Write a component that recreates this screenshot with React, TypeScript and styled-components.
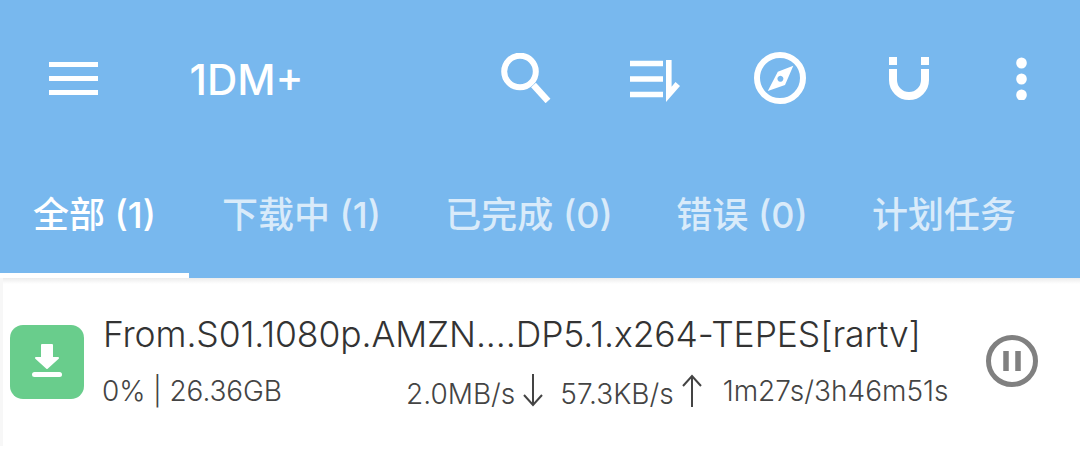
import React from "react";
import styled, { createGlobalStyle } from "styled-components";

const Global = createGlobalStyle`
  html, body { margin: 0; padding: 0; background: #fff; }
  body { width: 1080px; height: 468px; overflow: hidden; font-family: "Inter", "Noto Sans CJK SC", sans-serif; }
`;

const Page = styled.div`
  width: 1080px;
  height: 468px;
  display: flex;
  flex-direction: column;
  background: #fff;
`;

const Header = styled.header`
  background: #78b8ee;
  height: 278px;
  display: flex;
  flex-direction: column;
  flex: none;
`;

const Toolbar = styled.div`
  height: 156px;
  display: flex;
  align-items: center;
  flex: none;
  padding: 0 53px 0 49px;
`;

const ToolSlot = styled.div<{ $gap: number }>`
  margin-left: ${(p) => p.$gap}px;
  flex: none;
  display: flex;
  align-items: center;
`;

const MenuSlot = styled.div`
  flex: none;
  display: flex;
`;

const Title = styled.div`
  flex: 1;
  padding-left: 91.5px;
  font-size: 42px;
  font-weight: 500;
  color: #fff;
  margin-top: 2px;
`;

const Tabs = styled.div`
  flex: 1;
  display: flex;
`;

const Tab = styled.div<{ $w: number; $active?: boolean }>`
  width: ${(p) => p.$w}px;
  flex: none;
  box-sizing: border-box;
  padding-bottom: 6px;
  display: flex;
  justify-content: center;
  align-items: center;
  font-family: "Inter", "Noto Sans CJK SC", sans-serif;
  font-size: 36px;
  font-weight: 500;
  white-space: nowrap;
  color: ${(p) => (p.$active ? "#fff" : "rgba(255,255,255,0.72)")};
  border-bottom: 5px solid ${(p) => (p.$active ? "#fff" : "transparent")};
`;

const Body = styled.div`
  height: 168px;
  flex: none;
  box-sizing: border-box;
  display: flex;
  border-left: 3px solid #f7f7f7;
  background: linear-gradient(#ececec 0, #fff 6px);
`;

const Row = styled.div`
  flex: 1;
  display: flex;
  padding: 47px 0 0 7px;
`;

const FileIcon = styled.div`
  width: 74px;
  height: 74px;
  border-radius: 13px;
  background: #69cd8c;
  display: flex;
  align-items: center;
  justify-content: center;
  flex: none;
`;

const Info = styled.div`
  margin-left: 19px;
  margin-top: -13px;
  width: 882px;
  color: #333;
`;

const Name = styled.div`
  font-size: 35.5px;
  font-weight: 300;
  line-height: 46px;
  letter-spacing: -0.11px;
  white-space: nowrap;
`;

const Meta = styled.div`
  display: flex;
  align-items: center;
  margin-top: 10px;
  font-size: 28px;
  font-weight: 300;
  line-height: 40px;
  color: #444;
  white-space: nowrap;
`;

const Size = styled.span`
  width: 303px;
  flex: none;
  margin-left: -1px;
  margin-right: 1px;
  letter-spacing: -0.1px;
`;

const Speed = styled.span<{ $after: number }>`
  display: inline-flex;
  align-items: center;
  gap: 8px;
  margin-right: ${(p) => p.$after}px;
`;

const Rate = styled.span`
  padding-top: 6px;
`;

const ArrowSvg = styled.svg`
  width: 20px;
  height: 33px;
  flex: none;
  margin-top: -1px;
  fill: none;
  stroke: #444;
  stroke-width: 2;
`;

const PauseSlot = styled.div`
  margin: 9px 0 0 0;
  flex: none;
`;

const Menu = () => (
  <svg width="49" height="33" viewBox="0 0 49 33">
    <path d="M0 2.500h49M0 16.500h49M0 30.500h49" stroke="#fff" strokeWidth="5" />
  </svg>
);
const Search = () => (
  <svg width="50" height="50" viewBox="0 0 50 50" fill="none" stroke="#fff">
    <circle cx="19" cy="18.500" r="15.800" strokeWidth="6" />
    <path d="M32.500 32l14.500 16" strokeWidth="6.500" />
  </svg>
);
const Sort = () => (
  <svg width="50" height="48" viewBox="0 -6 50 48" fill="#fff">
    <path d="M0 3.400h33M0 19h33M0 34.500h33" stroke="#fff" strokeWidth="5.500" />
    <path d="M36 0H41.600V26.700L45.500 22L50 26L36 42Z" />
  </svg>
);
const Compass = () => (
  <svg width="52" height="52" viewBox="0 0 52 52" fill="none">
    <circle cx="26" cy="26" r="23" stroke="#fff" strokeWidth="6" />
    <path
      fillRule="evenodd"
      fill="#fff"
      d="M39.300 13.700L23.800 19.700 13.800 39 31 33zM26.400 23.700a3 3 0 1 0 .01 0z"
    />
  </svg>
);
const Magnet = () => (
  <svg width="40" height="44" viewBox="0 -1 40 44" fill="none" stroke="#fff">
    <path d="M0 4h8M32 4h8" strokeWidth="8" />
    <path d="M4 12V23a16 16 0 0 0 32 0V12" strokeWidth="8" />
  </svg>
);
const More = () => (
  <svg width="11" height="44" viewBox="0 -1 11 44" fill="#fff">
    <ellipse cx="5.500" cy="6" rx="5.300" ry="5.500" />
    <ellipse cx="5.500" cy="22" rx="5.300" ry="5.500" />
    <ellipse cx="5.500" cy="38" rx="5.300" ry="5.500" />
  </svg>
);
const Download = () => (
  <svg width="32" height="36" viewBox="0 0 32 36" fill="#fff">
    <path
      d="M11 1h10v13h6L16 24 5 14h6z"
      stroke="#fff"
      strokeWidth="2"
      strokeLinejoin="round"
    />
    <rect x="1" y="28" width="30" height="5" rx="2.500" />
  </svg>
);
const Pause = () => (
  <svg width="54" height="54" viewBox="0 0 54 54" fill="none">
    <circle cx="27" cy="27" r="23.500" stroke="#808080" strokeWidth="5" />
    <path d="M21 17v20M33 17v20" stroke="#808080" strokeWidth="5.500" />
  </svg>
);
const ArrowDown = () => (
  <ArrowSvg viewBox="0 0 20 33">
    <path d="M10 0v31M1 21l9 10 9-10" />
  </ArrowSvg>
);
const ArrowUp = () => (
  <ArrowSvg viewBox="0 0 20 33">
    <path d="M10 33V2M1 12l9-10 9 10" />
  </ArrowSvg>
);

export default function App() {
  return (
    <Page>
      <Global />
      <Header>
        <Toolbar>
          <MenuSlot>
            <Menu />
          </MenuSlot>
          <Title>1DM+</Title>
          <ToolSlot $gap={0}>
            <Search />
          </ToolSlot>
          <ToolSlot $gap={79}>
            <Sort />
          </ToolSlot>
          <ToolSlot $gap={74}>
            <Compass />
          </ToolSlot>
          <ToolSlot $gap={83}>
            <Magnet />
          </ToolSlot>
          <ToolSlot $gap={87}>
            <More />
          </ToolSlot>
        </Toolbar>
        <Tabs>
          <Tab $w={189} $active>
            全部 (1)
          </Tab>
          <Tab $w={225}>下载中 (1)</Tab>
          <Tab $w={230}>已完成 (0)</Tab>
          <Tab $w={196}>错误 (0)</Tab>
          <Tab $w={208}>计划任务</Tab>
        </Tabs>
      </Header>
      <Body>
        <Row>
          <FileIcon>
            <Download />
          </FileIcon>
          <Info>
            <Name>From.S01.1080p.AMZN.…DP5.1.x264-TEPES[rartv]</Name>
            <Meta>
              <Size>0% | 26.36GB</Size>
              <Speed $after={17}>
                <Rate>2.0MB/s</Rate>
                <ArrowDown />
              </Speed>
              <Speed $after={21}>
                <Rate>57.3KB/s</Rate>
                <ArrowUp />
              </Speed>
              <span>1m27s/3h46m51s</span>
            </Meta>
          </Info>
          <PauseSlot>
            <Pause />
          </PauseSlot>
        </Row>
      </Body>
    </Page>
  );
}
